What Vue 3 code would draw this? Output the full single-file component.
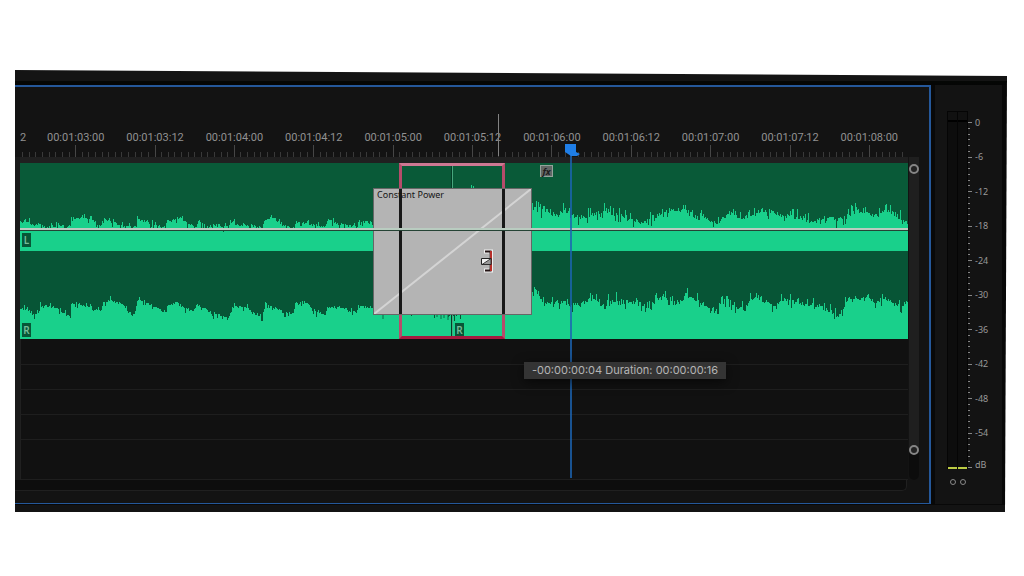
<script setup>
const timecodes = [
  '00:01:03:00', '00:01:03:12', '00:01:04:00', '00:01:04:12', '00:01:05:00', '00:01:05:12',
  '00:01:06:00', '00:01:06:12', '00:01:07:00', '00:01:07:12', '00:01:08:00',
]
const ticks = Array.from({ length: 134 }, (_, i) => ({
  x: Math.round(2.2 + i * 6.615) + 0.5,
  top: i % 12 === 8 ? 0 : 7,
  color: i % 12 === 8 ? '#464646' : '#393939',
}))
const levels = [0, -6, -12, -18, -24, -30, -36, -42, -48, -54]
const meterTicks = Array.from({ length: 61 }, (_, i) => ({
  y: Math.round(i * 5.75) + 0.5,
  w: i % 6 === 0 ? 4 : 2,
}))

// Envelope points: distance from the clip's left edge, height below the clip's top.
const leftEnvelope = [
  [0, 59], [8, 58], [13, 63], [20, 60], [24, 65], [38, 62], [50, 64], [51, 55], [65, 55], [75, 59], [81, 63], [82, 57], [90, 58],
  [105, 64], [116, 64], [117, 56], [130, 60], [145, 64], [147, 57], [160, 55], [170, 61], [176, 65], [178, 57], [184, 64],
  [195, 62], [205, 64], [212, 59], [220, 63], [230, 62], [242, 65], [244, 58], [255, 55], [260, 61], [272, 65], [277, 59],
  [283, 60], [292, 62], [305, 64], [308, 57], [315, 60], [325, 62], [336, 64], [338, 58], [353, 59], [452, 63], [511, 54],
  [512, 48], [516, 44], [525, 48], [535, 52], [543, 47], [551, 50], [558, 54], [570, 53], [577, 49], [585, 46], [592, 52],
  [600, 51], [608, 56], [625, 59], [631, 55], [640, 50], [650, 47], [655, 46], [667, 49], [677, 55], [690, 57], [697, 60],
  [705, 53], [712, 51], [720, 56], [725, 55], [737, 50], [742, 46], [752, 49], [765, 53], [780, 54], [790, 59], [800, 57],
  [808, 53], [816, 58], [825, 55], [833, 49], [838, 47], [846, 51], [860, 52], [866, 47], [873, 50], [880, 55], [888, 59],
]
const rightEnvelope = [
  [0, 147], [6, 146], [12, 151], [18, 151], [20, 143], [36, 144], [42, 150], [50, 154], [51, 141], [57, 140], [65, 144], [75, 147],
  [81, 148], [82, 140], [90, 137], [98, 140], [105, 146], [114, 151], [117, 139], [123, 137], [130, 141], [137, 146],
  [145, 149], [147, 142], [157, 140], [165, 146], [172, 148], [177, 142], [183, 145], [190, 149], [200, 153], [210, 154],
  [212, 144], [225, 144], [232, 150], [242, 153], [244, 143], [255, 145], [263, 150], [273, 150], [275, 141], [285, 139],
  [292, 147], [305, 153], [307, 145], [318, 143], [330, 149], [336, 149], [338, 144], [353, 144], [365, 149], [415, 150],
  [432, 153], [450, 148], [511, 140], [512, 128], [514, 126], [517, 131], [520, 136], [528, 141], [543, 138], [550, 142],
  [560, 142], [570, 136], [580, 141], [592, 137], [605, 139], [620, 141], [630, 146], [635, 138], [643, 133], [652, 140],
  [660, 139], [665, 131], [675, 136], [683, 141], [690, 148], [697, 144], [702, 137], [707, 135], [715, 144], [725, 146],
  [730, 137], [736, 132], [745, 141], [755, 141], [763, 136], [777, 141], [795, 142], [805, 146], [818, 153], [823, 147],
  [827, 134], [835, 135], [845, 136], [855, 139], [865, 135], [873, 141], [880, 142], [888, 139],
]

function wavePath(points, bottom, seedStart) {
  let seed = seedStart
  const random = () => {
    seed = (seed * 16807) % 2147483647
    return seed / 2147483647
  }
  let path = `M0 ${bottom}`
  let index = 0
  for (let x = 0; x < 888; x++) {
    while (index < points.length - 2 && points[index + 1][0] <= x) index++
    const [x0, y0] = points[index]
    const [x1, y1] = points[index + 1]
    const base = y0 + ((y1 - y0) * (x - x0)) / (x1 - x0)
    const strong = x > 505
    let offset = (random() - 0.5) * (strong ? 5 : 3)
    const spike = random()
    if (spike > 0.88) offset -= strong ? 6 : 3
    if (spike < 0.1) offset += strong ? 6 : 4
    const y = Math.round(base + offset)
    path += `V${y}H${x + 1}`
  }
  return `${path}V${bottom}Z`
}
const leftWave = wavePath(leftEnvelope, 88, 4711)
const rightWave = wavePath(rightEnvelope, 176, 9173)
</script>

<template>
  <main class="page">
    <div class="editor">
      <section class="timeline" aria-label="Timeline">
        <header class="ruler">
          <div class="labels">
            <span class="cut">2</span>
            <time v-for="code in timecodes" :key="code">{{ code }}</time>
          </div>
          <svg class="ticks" viewBox="0 0 888 12" preserveAspectRatio="none" aria-hidden="true">
            <path v-for="tick in ticks" :key="tick.x" :d="`M${tick.x} ${tick.top}V12`" :stroke="tick.color" />
          </svg>
        </header>

        <div class="body">
          <div class="tracks">
            <div class="clip">
              <svg class="wave" viewBox="0 0 888 176" preserveAspectRatio="none" aria-hidden="true">
                <path :d="leftWave" fill="#19d08b" />
                <path :d="rightWave" fill="#19d08b" />
                <path d="M417 151V154M421 151V156M424 151V155M428 151V157M432 151V156M363 151V156" stroke="#0b6b44" />
                <path d="M451.500 22V26M453.500 23V26" stroke="#19d08b" />
              </svg>
              <span class="channel left">L</span>
              <span class="channel right">R</span>
              <span class="seam"></span>
              <span class="channel next">R</span>
              <button class="fx" type="button">fx</button>
              <div class="selection"></div>
              <div class="transition">
                <svg class="slope" viewBox="0 0 156 125" preserveAspectRatio="none" aria-hidden="true">
                  <path d="M0 125L156 0" stroke="#d4d4d4" stroke-width="2" />
                </svg>
                <span class="rail start"></span>
                <span class="rail end"></span>
                <span class="name">Constant Power</span>
              </div>
              <div class="volume"></div>
              <svg class="cursor" viewBox="0 0 14 24" aria-hidden="true">
                <path d="M4 2.500H11V21.500H4" fill="none" stroke="#eee" stroke-width="4" />
                <path d="M5 2.500H10.500V21.500H5" fill="none" stroke="#241414" stroke-width="2" />
                <path d="M11 2V22" stroke="#b52e29" stroke-width="2" />
                <path d="M1.500 9.500H11V15.500H1.500Z" fill="#f2f2f2" stroke="#222" />
                <path d="M2 15.500L11 9.500V15.500Z" fill="#999" stroke="#222" stroke-width=".8" />
              </svg>
            </div>
            <div class="lane first"></div>
            <div class="lane"></div>
            <div class="lane"></div>
            <div class="lane"></div>
            <div class="lane tall"></div>
          </div>
          <div class="zoom">
            <button type="button" aria-label="Top zoom handle"></button>
            <button type="button" aria-label="Bottom zoom handle"></button>
          </div>
        </div>
        <div class="hscroll"></div>

        <span class="marker"></span>
        <div class="playhead">
          <svg viewBox="0 0 16 12" aria-hidden="true"><path d="M0 0H11V8L15 10L12 12H6L0 8Z" fill="#1f7ee6" /></svg>
        </div>
        <output class="tip">-00:00:00:04 Duration: 00:00:00:16</output>
      </section>

      <aside class="meters" aria-label="Audio meters">
        <div class="meter">
          <div class="bars"><i></i><i></i></div>
          <svg class="scale" viewBox="0 0 5 350" aria-hidden="true">
            <path v-for="tick in meterTicks" :key="tick.y" :d="`M0 ${tick.y}H${tick.w}`" stroke="#858585" />
          </svg>
          <ol class="levels">
            <li v-for="level in levels" :key="level">{{ level }}</li>
            <li class="unit">dB</li>
          </ol>
        </div>
        <div class="solo">
          <button type="button" aria-label="Solo left"></button>
          <button type="button" aria-label="Solo right"></button>
        </div>
      </aside>
    </div>
  </main>
</template>

<style>
body {
  background: #fff;
}
</style>

<style scoped>
* {
  box-sizing: border-box;
}
button {
  padding: 0;
  border: 0;
  background: none;
}
.page {
  padding: 70px 17px 64px 15px;
  font-family: "Noto Sans", sans-serif;
}
.editor {
  display: flex;
  gap: 4px;
  padding: 15px 5px 8px 0;
  background: linear-gradient(#141414 11px, #050705 11px, #050505 15px, #080808 15px, #080808 calc(100% - 7px), #131313 calc(100% - 7px));
  clip-path: polygon(0 0, 100% 6px, calc(100% - 2px) 100%, 0 100%);
}
.timeline {
  position: relative;
  flex: 1;
  min-width: 0;
  border: solid #25589a;
  border-width: 2px 2px 1px 0;
  background: #131313;
}
.ruler {
  padding-top: 43px;
}
.labels {
  display: grid;
  grid-template-columns: 21px repeat(11, 1fr);
  padding-right: 20px;
  color: #919191;
  font: 11px/15px Roboto, sans-serif;
  text-align: center;
}
.cut {
  padding-left: 5px;
  text-align: left;
}
.ticks {
  display: block;
  width: calc(100% - 26px);
  height: 12px;
  margin-left: 5px;
}
.body {
  display: flex;
  gap: 1px;
  padding-right: 10px;
}
.tracks {
  flex: 1;
  padding-top: 6px;
  border-left: 5px solid #1a1a1a;
  background: linear-gradient(#202020 6px, #111 6px);
}
.clip {
  position: relative;
  height: 176px;
  background: linear-gradient(#095a38 88px, #075536 88px);
}
.wave {
  display: block;
  width: 100%;
  height: 176px;
}
.channel {
  position: absolute;
  width: 9px;
  height: 14px;
  background: #075637;
  color: #75bd9a;
  font-size: 10px;
  font-weight: 600;
  line-height: 14px;
  text-align: center;
}
.left {
  top: 70px;
  left: 2px;
}
.right {
  top: 160px;
  left: 2px;
}
.next {
  top: 160px;
  left: 435px;
}
.seam {
  position: absolute;
  top: 0;
  left: 431px;
  width: 2px;
  height: 176px;
  border: solid #043c26;
  border-width: 0 0 0 1px;
  background: #48a67e;
}
.fx {
  position: absolute;
  top: 2px;
  left: 520px;
  width: 13px;
  height: 12px;
  border: 1px solid #94a39b;
  background: #626766;
  color: #1d1d1d;
  font: italic bold 9px/9px "Noto Sans", sans-serif;
}
.selection {
  position: absolute;
  top: 0;
  left: 379px;
  width: 106px;
  height: 176px;
  border: 3px solid;
  border-color: #ce7893 #b64c6b #a51b40;
}
.transition {
  position: absolute;
  top: 25px;
  left: 353px;
  width: 159px;
  height: 127px;
  border: 1px solid #666;
  background: #b4b4b4;
}
.slope {
  display: block;
  width: 100%;
  height: 100%;
}
.rail {
  position: absolute;
  top: 0;
  bottom: 0;
  width: 3px;
  background: #181818;
}
.start {
  left: 25px;
}
.end {
  right: 26px;
}
.name {
  position: absolute;
  top: 0;
  left: 3px;
  color: #161616;
  font-size: 9px;
  line-height: 12px;
  white-space: nowrap;
}
.volume {
  position: absolute;
  top: 65px;
  right: 0;
  left: 0;
  height: 3px;
  border-bottom: 1px solid #254335;
  background: #b9ccc0;
}
.cursor {
  position: absolute;
  top: 86px;
  left: 460px;
  width: 14px;
  height: 24px;
}
.lane {
  height: 25px;
  border-left: 1px solid #202020;
  border-bottom: 1px solid #1e1e1e;
}
.first {
  height: 26px;
}
.tall {
  height: 40px;
}
.zoom {
  display: flex;
  flex-direction: column;
  justify-content: space-between;
  width: 10px;
  padding: 7px 0 25px;
  border-radius: 0 0 5px 5px;
  background: linear-gradient(#1f1f1f 292px, #0c0c0c 292px);
}
.zoom button {
  width: 10px;
  height: 10px;
  border: 2px solid #858585;
  border-radius: 50%;
  background: #222;
}
.hscroll {
  height: 11px;
  margin: 0 22px 12px 0;
  border: 1px solid #202020;
  border-width: 0 1px 1px 0;
  border-radius: 0 0 5px 0;
  background: #0d0d0d;
}
.marker {
  position: absolute;
  top: 27px;
  left: 483px;
  width: 1px;
  height: 42px;
  background: #828282;
}
.playhead {
  position: absolute;
  top: 57px;
  bottom: 25px;
  left: 555px;
  width: 2px;
  background: #1b64b3cc;
}
.playhead svg {
  position: absolute;
  left: -5px;
  width: 16px;
  height: 12px;
}
.tip {
  position: absolute;
  top: 275px;
  left: 509px;
  width: 202px;
  background: #343434;
  box-shadow: 0 3px 12px #0009;
  color: #b4b4b4;
  font: 11px/17px Inter, sans-serif;
  text-align: center;
  white-space: nowrap;
}
.meters {
  width: 67px;
  padding: 26px 0 0 12px;
  background: #131313;
}
.meter {
  display: flex;
  height: 368px;
}
.bars {
  display: grid;
  grid-template-columns: 1fr 1fr;
  gap: 1px;
  width: 21px;
  height: 358px;
  border: solid #050505;
  border-width: 1px 1px 0;
  background: linear-gradient(#111 8px, #000 8px, #000 10px, #0d0d0d 10px);
}
.bars i {
  border-bottom: 2px solid #bccb43;
}
.bars i:first-child {
  box-shadow: 1px 0 #050505;
}
.scale {
  width: 5px;
  height: 350px;
  margin-top: 11px;
}
.levels {
  margin: 5px 0 0 2px;
  padding: 0;
  color: #999;
  font-size: 9px;
  line-height: 14px;
  list-style: none;
}
.levels li {
  height: 14px;
  margin-bottom: 20px;
}
.levels li:nth-child(even) {
  margin-bottom: 21px;
}
.levels .unit {
  margin-top: -3px;
  margin-bottom: 0;
}
.solo {
  display: flex;
  gap: 4px;
  padding: 0 3px;
}
.solo button {
  width: 6px;
  height: 6px;
  border: 1px solid #888;
  border-radius: 50%;
}
</style>
